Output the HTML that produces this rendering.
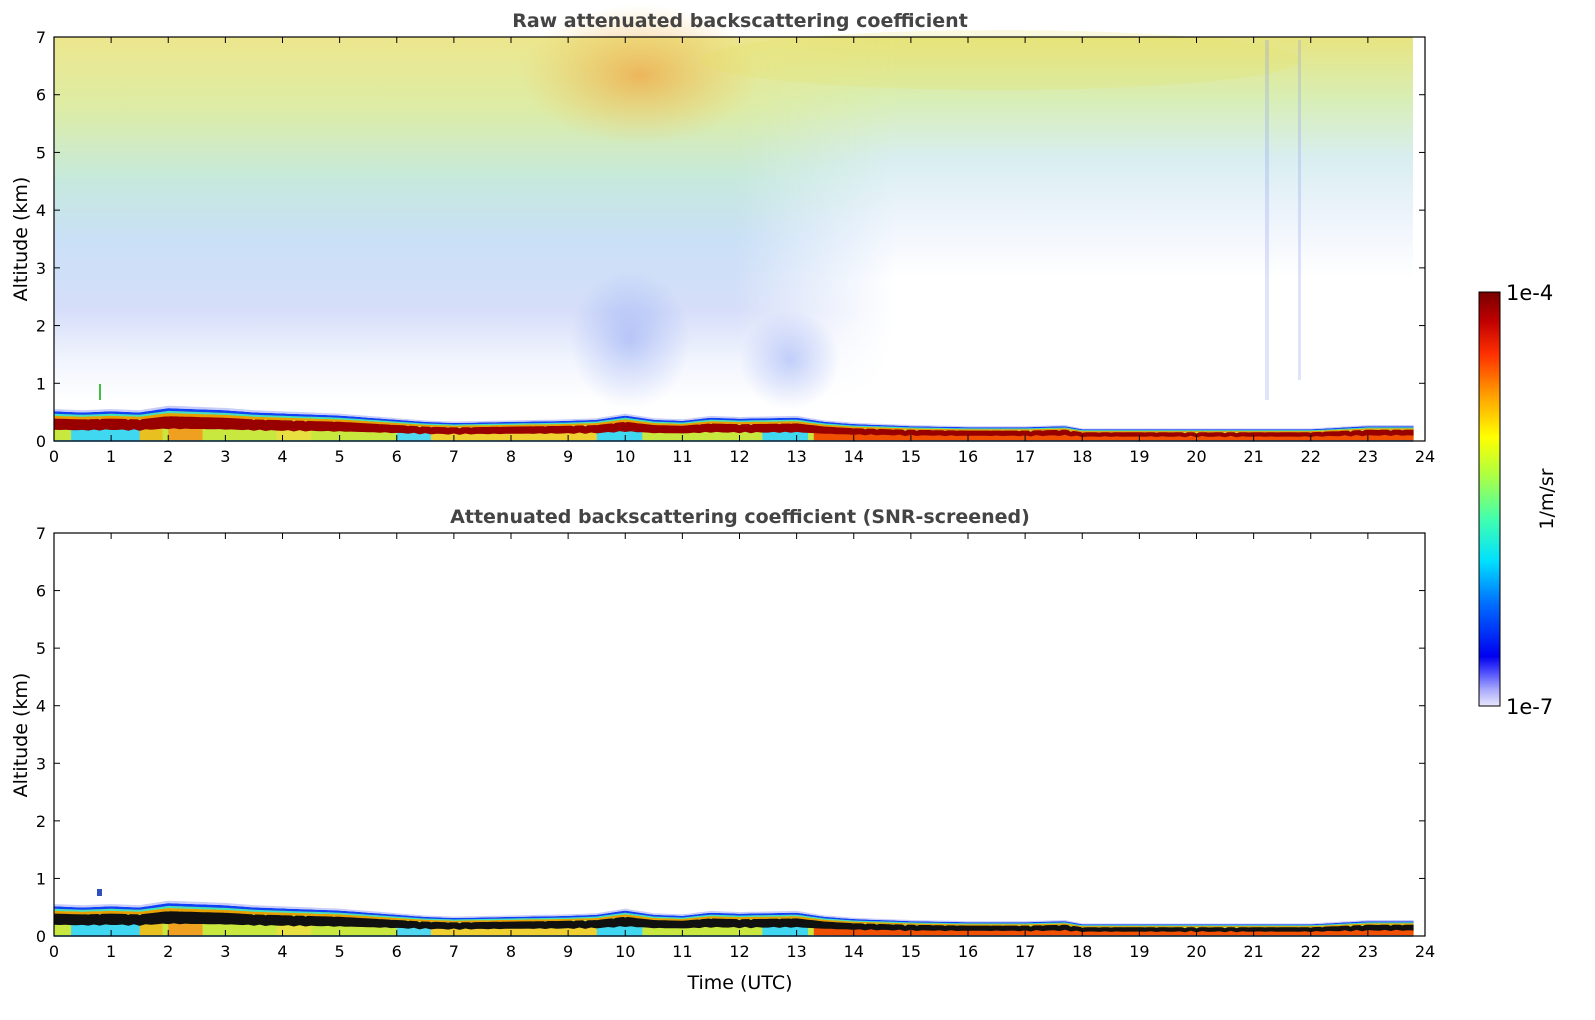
<!DOCTYPE html>
<html><head><meta charset="utf-8"><style>
html,body{margin:0;padding:0;background:#fff;}
svg{display:block;font-family:"DejaVu Sans","Liberation Sans",sans-serif;}
</style></head><body>
<svg id="s" width="1595" height="1020" viewBox="0 0 1595 1020" xmlns="http://www.w3.org/2000/svg">
<defs>
<linearGradient id="vL" x1="0" y1="0" x2="0" y2="1">
<stop offset="0" stop-color="#e8e070"/>
<stop offset="0.18" stop-color="#d4e890"/>
<stop offset="0.35" stop-color="#b8e4d4"/>
<stop offset="0.5" stop-color="#bcd8f4"/>
<stop offset="0.68" stop-color="#ccd6f8"/>
<stop offset="0.8" stop-color="#eef2fd"/>
<stop offset="0.9" stop-color="#ffffff"/>
</linearGradient>
<linearGradient id="vR" x1="0" y1="0" x2="0" y2="1">
<stop offset="0" stop-color="#e8e480"/>
<stop offset="0.15" stop-color="#d8eeb4"/>
<stop offset="0.3" stop-color="#d8eef0"/>
<stop offset="0.45" stop-color="#eef4fc"/>
<stop offset="0.6" stop-color="#ffffff"/>
</linearGradient>
<linearGradient id="hm" x1="0" y1="0" x2="1" y2="0">
<stop offset="0" stop-color="#fff" stop-opacity="0"/>
<stop offset="0.5" stop-color="#fff" stop-opacity="0"/>
<stop offset="0.62" stop-color="#fff" stop-opacity="1"/>
<stop offset="1" stop-color="#fff" stop-opacity="1"/>
</linearGradient>
<mask id="mR"><rect x="54" y="37" width="1359" height="404" fill="url(#hm)"/></mask>
<radialGradient id="og" cx="0.5" cy="0.5" r="0.5">
<stop offset="0" stop-color="#f0a040" stop-opacity="0.7"/>
<stop offset="1" stop-color="#f0c050" stop-opacity="0"/>
</radialGradient>
<radialGradient id="bg" cx="0.5" cy="0.5" r="0.5">
<stop offset="0" stop-color="#6080f0" stop-opacity="0.35"/>
<stop offset="1" stop-color="#6080f0" stop-opacity="0"/>
</radialGradient>
<linearGradient id="cb" x1="0" y1="1" x2="0" y2="0">
<stop offset="0" stop-color="#e8e8fc"/>
<stop offset="0.04" stop-color="#a8a8fc"/>
<stop offset="0.08" stop-color="#5050fc"/>
<stop offset="0.12" stop-color="#0000f0"/>
<stop offset="0.25" stop-color="#0070ff"/>
<stop offset="0.35" stop-color="#00e0ff"/>
<stop offset="0.45" stop-color="#40ffb0"/>
<stop offset="0.56" stop-color="#b0ff40"/>
<stop offset="0.65" stop-color="#ffff00"/>
<stop offset="0.75" stop-color="#ffa000"/>
<stop offset="0.85" stop-color="#ff3000"/>
<stop offset="0.93" stop-color="#c00000"/>
<stop offset="1" stop-color="#780000"/>
</linearGradient>
</defs>
<g id="p1"></g>
<g id="p2"></g>
<g id="ax" fill="#000" font-size="15"></g>
<text x="740" y="27" text-anchor="middle" font-size="19" font-weight="bold" fill="#444">Raw attenuated backscattering coefficient</text>
<text x="740" y="523" text-anchor="middle" font-size="19" font-weight="bold" fill="#444">Attenuated backscattering coefficient (SNR-screened)</text>
<text x="740" y="989" text-anchor="middle" font-size="19">Time (UTC)</text>
<text transform="translate(27,239) rotate(-90)" text-anchor="middle" font-size="19">Altitude (km)</text>
<text transform="translate(27,735) rotate(-90)" text-anchor="middle" font-size="19">Altitude (km)</text>
<rect x="1479" y="292" width="21" height="414" fill="url(#cb)" stroke="#000" stroke-width="1"/>
<text x="1506" y="300" font-size="21">1e-4</text>
<text x="1506" y="714" font-size="21">1e-7</text>
<text transform="translate(1553,499) rotate(-90)" text-anchor="middle" font-size="19">1/m/sr</text>
</svg>
<script>
var NS="http://www.w3.org/2000/svg";
function el(p,t,a){var e=document.createElementNS(NS,t);for(var k in a)e.setAttribute(k,a[k]);p.appendChild(e);return e;}
var X0=54,X1=1425,dx=(X1-X0)/24;
var prof=[[0,28],[0.5,27],[1,28],[1.5,27],[2,31],[2.5,30],[3,29],[3.5,27],[4,26],[4.5,25],[5,24],[5.5,22],[6,20],[6.5,18],[7,17],[8,18],[9,19],[9.5,20],[10,24],[10.5,20],[11,19],[11.5,22],[12,21],[13,22],[13.5,18],[14,16],[15,14],[16,13],[17,13],[17.7,14],[18,11],[19,11],[20,11],[21,11],[22,11],[23,14],[23.8,14]];
function h(t){for(var i=1;i<prof.length;i++){if(t<=prof[i][0]){var a=prof[i-1],b=prof[i];return a[1]+(b[1]-a[1])*(t-a[0])/(b[0]-a[0]);}}return prof[prof.length-1][1];}
function band(g,base,o1,o2,fill,jit){var pts=[],pts2=[];for(var t=0;t<=23.8001;t+=0.1){var x=X0+t*dx;var H=h(t);var j=jit?(Math.sin(t*37)+Math.sin(t*91))*0.8:0;pts.push(x.toFixed(1)+","+(base-H*o1-j).toFixed(1));pts2.unshift(x.toFixed(1)+","+(base-H*o2-(jit?j*0.5:0)).toFixed(1));}el(g,"polygon",{points:pts.concat(pts2).join(" "),fill:fill});}
function plot(g,base,top,dark,raw){
 if(raw){
  el(g,"rect",{x:X0,y:top,width:1359,height:404,fill:"url(#vL)",opacity:0.8});
  el(g,"rect",{x:X0,y:top,width:1359,height:404,fill:"url(#vR)",mask:"url(#mR)"});
  el(g,"ellipse",{cx:640,cy:75,rx:120,ry:70,fill:"url(#og)"});
  el(g,"ellipse",{cx:1000,cy:60,rx:300,ry:30,fill:"#e8e060",opacity:0.2});
  el(g,"rect",{x:1265,y:40,width:4,height:360,fill:"#8090f0",opacity:0.25});
  el(g,"rect",{x:1298,y:40,width:3,height:340,fill:"#8090f0",opacity:0.25});
  el(g,"ellipse",{cx:790,cy:360,rx:50,ry:50,fill:"url(#bg)"});
  el(g,"ellipse",{cx:630,cy:340,rx:60,ry:70,fill:"url(#bg)"});
 }
 band(g,base,1,0,"#c8e840");
 [[0.3,1.8,"#40d8f0"],[1.5,1.9,"#e8c020"],[2,2.6,"#f0a020"],[3.9,4.5,"#e8e040"],[6,6.6,"#50d8f0"],[9.5,10.3,"#40d8f0"],[12.4,13.2,"#40d8f0"],[6.6,9.5,"#f0d030"],[13.3,23.8,"#f05000"]].forEach(function(c){var pts=[];var a=c[0],b=c[1];pts.push((X0+a*dx)+","+base);for(var t=a;t<=b+0.001;t+=0.1)pts.push((X0+t*dx).toFixed(1)+","+(base-h(t)*0.45).toFixed(1));pts.push((X0+b*dx)+","+base);el(g,"polygon",{points:pts.join(" "),fill:c[2]});});
 band(g,base,0.82,0.4,dark,true);
 band(g,base,0.9,0.8,"#e8a000",false);
 band(g,base,0.97,0.9,"#40e0c0",false);
 band(g,base,1.06,0.97,"#1040f8",false);
 band(g,base,1.14,1.06,"#c8ccf8",false);
 el(g,"rect",{x:X0,y:base-1,width:1359,height:2,fill:"#40a0f0",opacity:0.6});
}
plot(document.getElementById("p1"),441,37,"#980000",true);
plot(document.getElementById("p2"),936,533,"#101010",false);
el(document.getElementById("p2"),"rect",{x:97,y:889,width:5,height:7,fill:"#3050c0"});
el(document.getElementById("p1"),"rect",{x:99,y:384,width:2,height:16,fill:"#40c040"});
var ax=document.getElementById("ax");
[[37,441],[533,936]].forEach(function(p,k){var T=p[0],B=p[1];
 el(ax,"rect",{x:X0,y:T,width:X1-X0,height:B-T,fill:"none",stroke:"#000","stroke-width":1.2});
 var dy=(B-T)/7;
 for(var i=0;i<=7;i++){var y=B-i*dy;el(ax,"line",{x1:X0,y1:y,x2:X0+6,y2:y,stroke:"#000"});el(ax,"line",{x1:X1,y1:y,x2:X1-6,y2:y,stroke:"#000"});var t=el(ax,"text",{x:X0-8,y:y+6,"text-anchor":"end","font-size":16});t.textContent=i;}
 for(var i=0;i<=24;i++){var x=X0+i*dx;el(ax,"line",{x1:x,y1:B,x2:x,y2:B-6,stroke:"#000"});el(ax,"line",{x1:x,y1:T,x2:x,y2:T+6,stroke:"#000"});var t=el(ax,"text",{x:x,y:B+21,"text-anchor":"middle","font-size":16});t.textContent=i;}
});
</script>
</body></html>
